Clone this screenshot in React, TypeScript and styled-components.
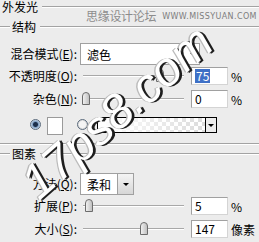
import React from 'react';
import styled, { createGlobalStyle } from 'styled-components';

const Global = createGlobalStyle`
  html, body { margin: 0; padding: 0; background: #ECECEC; }
  body { width: 259px; height: 242px; overflow: hidden; }
`;

const Panel = styled.div`
  position: relative;
  width: 259px;
  height: 242px;
  overflow: hidden;
  background: #ECECEC;
  font-family: "Noto Sans CJK SC", "Liberation Sans", sans-serif;
  font-size: 12px;
  color: #000;
  display: flex;
  flex-direction: column;
`;

const TitleRow = styled.div<{ $lead: number; $mt: number }>`
  display: flex;
  align-items: center;
  height: 14px;
  line-height: 14px;
  margin-top: ${p => p.$mt}px;
  &::before {
    content: '';
    width: ${p => p.$lead}px;
    border-top: 1px solid #a3a3a3;
    border-bottom: 1px solid #fff;
  }
  &::after {
    content: '';
    flex: 1;
    border-top: 1px solid #a3a3a3;
    border-bottom: 1px solid #fff;
  }
`;

const TitleText = styled.span`
  padding: 0 4px 0 2px;
`;

const Divider = styled.div<{ $mt: number }>`
  margin-top: ${p => p.$mt}px;
  border-top: 1px solid #a3a3a3;
  border-bottom: 1px solid #fff;
`;

const Row = styled.div<{ $mt: number; $h: number }>`
  display: flex;
  align-items: center;
  height: ${p => p.$h}px;
  margin-top: ${p => p.$mt}px;
`;

const Label = styled.div`
  width: 80px;
  box-sizing: border-box;
  padding-right: 3px;
  text-align: right;
  white-space: nowrap;
  line-height: 14px;
`;

const Select = styled.div<{ $w: number }>`
  position: relative;
  box-sizing: border-box;
  width: ${p => p.$w}px;
  height: 22px;
  background: #fff;
  border: 1px solid #a0a0a0;
  padding-left: 6px;
  display: flex;
  align-items: center;
`;

const SelectArrow = styled.div`
  box-sizing: border-box;
  width: 16px;
  height: 22px;
  border: 1px solid #a0a0a0;
  border-left: none;
  background: linear-gradient(#f4f4f4, #d6d6d6);
  display: flex;
  align-items: center;
  justify-content: center;
  &::after {
    content: '';
    border-left: 3px solid transparent;
    border-right: 3px solid transparent;
    border-top: 3px solid #000;
  }
`;

const InnerArrow = styled.div`
  margin-left: auto;
  width: 13px;
  height: 100%;
  display: flex;
  align-items: center;
  justify-content: center;
  &::after {
    content: '';
    border-left: 3px solid transparent;
    border-right: 3px solid transparent;
    border-top: 3px solid #000;
  }
`;

const Track = styled.div`
  position: relative;
  width: 101px;
  height: 0;
  margin-left: 3px;
  border-top: 1px solid #a8a8a8;
  border-bottom: 1px solid #fff;
`;

const Thumb = styled.svg`
  position: absolute;
  top: -7px;
  width: 8px;
  height: 13px;
`;

const NumBox = styled.div`
  box-sizing: border-box;
  width: 37px;
  height: 18px;
  margin-left: 7px;
  background: #fff;
  border: 1px solid #a0a0a0;
  border-right-color: #d4d4d4;
  border-bottom-color: #d4d4d4;
  padding-left: 3px;
  display: flex;
  align-items: center;
  line-height: 14px;
`;

const Selected = styled.span`
  background: #3e70c6;
  color: #fff;
  padding: 0 1px;
`;

const Unit = styled.span`
  margin-left: 3px;
`;

const ColorRow = styled.div`
  display: flex;
  align-items: flex-start;
  height: 18px;
  margin-top: 9px;
  padding-left: 30px;
`;

const Radio = styled.div<{ $on: boolean; $ml: number }>`
  box-sizing: border-box;
  width: 11px;
  height: 11px;
  margin-top: 2px;
  margin-left: ${p => p.$ml}px;
  border-radius: 50%;
  border: 1px solid #5b6b7d;
  background: ${p => p.$on
    ? 'radial-gradient(circle, #1d2f4a 0 2px, #7fa0c4 3px, #dfe8f0 5px)'
    : 'radial-gradient(circle, #f4f4f4 0 3px, #cfcfcf 5px)'};
`;

const Swatch = styled.div`
  box-sizing: border-box;
  width: 16px;
  height: 18px;
  margin-left: 6px;
  background: #fff;
  border: 1px solid #9a9a9a;
`;

const GradientBox = styled.div`
  box-sizing: border-box;
  display: flex;
  width: 120px;
  height: 16px;
  margin-left: 9px;
  border: 1px solid #000;
  background:
    linear-gradient(to right, #fff, rgba(255,255,255,0)),
    conic-gradient(#d8d8d8 25%, #fff 0 50%, #d8d8d8 0 75%, #fff 0) 0 0 / 8px 8px;
`;

const GradArrow = styled.div`
  box-sizing: border-box;
  margin-left: auto;
  width: 11px;
  height: 100%;
  background: #ececec;
  border-left: 1px solid #000;
  display: flex;
  align-items: center;
  justify-content: center;
  &::after {
    content: '';
    border-left: 3px solid transparent;
    border-right: 3px solid transparent;
    border-top: 3px solid #000;
  }
`;

const Banner = styled.div`
  position: absolute;
  top: 9px;
  left: 86px;
  display: flex;
  align-items: center;
  color: #8c8c8c;
  white-space: nowrap;
`;

const BannerCn = styled.span`
  font-size: 12px;
  line-height: 14px;
  letter-spacing: -0.3px;
`;

const BannerEn = styled.span`
  margin-left: 6px;
  font-family: "DejaVu Sans", sans-serif;
  font-size: 8px;
  letter-spacing: 0.4px;
  color: #7d7d7d;
`;

const Watermark = styled.div`
  position: absolute;
  left: 117px;
  top: 112px;
  transform: translate(-50%, -50%) rotate(-41deg);
  font-family: "Liberation Sans", sans-serif;
  font-style: italic;
  font-size: 48px;
  line-height: 48px;
  color: #fff;
  white-space: nowrap;
  text-shadow: 2px 2px 0 #1e1e1e, 1px 1px 0 #555, -1px -1px 0 #bbb;
  pointer-events: none;
`;

const ThumbIcon = ({ left }: { left: number }) => (
  <Thumb viewBox="0 0 8 13" style={{ left }}>
    <defs>
      <linearGradient id="tg" x1="0" x2="1">
        <stop offset="0" stopColor="#f4f4f4" />
        <stop offset="1" stopColor="#bdbdbd" />
      </linearGradient>
    </defs>
    <path d="M0.5 12.5 V4 Q0.5 0.5 4 0.5 Q7.5 0.5 7.5 4 V12.5 Z" fill="url(#tg)" stroke="#6c6c6c" />
  </Thumb>
);

const SliderRow = ({ label, mt, thumb, value, unit, sel }: {
  label: React.ReactNode; mt: number; thumb: number; value: string; unit: string; sel?: boolean;
}) => (
  <Row $mt={mt} $h={18}>
    <Label>{label}</Label>
    <Track><ThumbIcon left={thumb} /></Track>
    <NumBox>{sel ? <Selected>{value}</Selected> : value}</NumBox>
    <Unit>{unit}</Unit>
  </Row>
);

export default function App() {
  return (
    <Panel>
      <Global />
      <TitleRow $lead={0} $mt={0}><TitleText>外发光</TitleText></TitleRow>
      <TitleRow $lead={10} $mt={6}><TitleText>结构</TitleText></TitleRow>
      <Row $mt={9} $h={22}>
        <Label>混合模式(<u>E</u>):</Label>
        <Select $w={120}>滤色<InnerArrow /></Select>
      </Row>
      <SliderRow label={<>不透明度(<u>O</u>):</>} mt={2} thumb={73} value="75" unit="%" sel />
      <SliderRow label={<>杂色(<u>N</u>):</>} mt={5} thumb={-1} value="0" unit="%" />
      <ColorRow>
        <Radio $on={true} $ml={0} />
        <Swatch />
        <Radio $on={false} $ml={14} />
        <GradientBox><GradArrow /></GradientBox>
      </ColorRow>
      <Divider $mt={8} />
      <TitleRow $lead={10} $mt={2}><TitleText>图素</TitleText></TitleRow>
      <Row $mt={12} $h={22}>
        <Label>方法(<u>Q</u>):</Label>
        <Select $w={38}>柔和</Select>
        <SelectArrow />
      </Row>
      <SliderRow label={<>扩展(<u>P</u>):</>} mt={2} thumb={2} value="5" unit="%" />
      <SliderRow label={<>大小(<u>S</u>):</>} mt={5} thumb={57} value="147" unit="像素" />
      <Banner>
        <BannerCn>思缘设计论坛</BannerCn>
        <BannerEn>WWW.MISSYUAN.COM</BannerEn>
      </Banner>
      <Watermark>17ps8.com</Watermark>
    </Panel>
  );
}
